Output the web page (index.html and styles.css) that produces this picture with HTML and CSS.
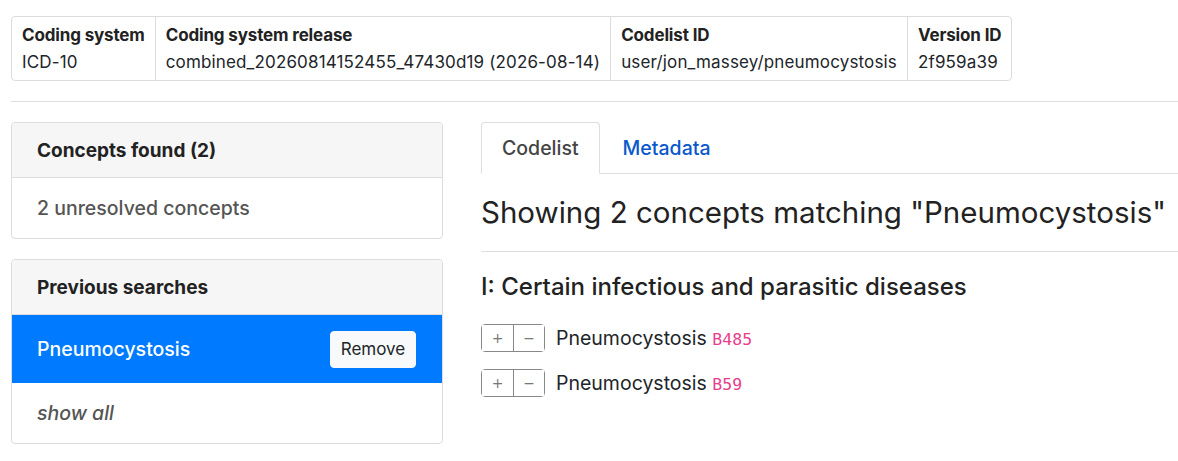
FILE: index.html
```html
<!DOCTYPE html>
<html lang="en">
<head>
<meta charset="utf-8">
<title>Codelist</title>
<link rel="stylesheet" href="styles.css">
</head>
<body>
<div class="page">
  <div class="meta">
    <div class="meta-cell"><div class="meta-key">Coding system</div><div class="meta-val">ICD-10</div></div>
    <div class="meta-cell"><div class="meta-key">Coding system release</div><div class="meta-val">combined_20260814152455_47430d19 (2026-08-14)</div></div>
    <div class="meta-cell"><div class="meta-key">Codelist ID</div><div class="meta-val">user/jon_massey/pneumocystosis</div></div>
    <div class="meta-cell"><div class="meta-key">Version ID</div><div class="meta-val">2f959a39</div></div>
  </div>
  <hr class="rule rule-top">
  <div class="layout">
    <aside class="sidebar">
      <section class="card">
        <div class="card-head">Concepts found (2)</div>
        <div class="card-item muted">2 unresolved concepts</div>
      </section>
      <section class="card">
        <div class="card-head">Previous searches</div>
        <div class="card-item active">
          <span>Pneumocystosis</span>
          <button class="btn-remove" type="button">Remove</button>
        </div>
        <div class="card-item muted italic">show all</div>
      </section>
    </aside>
    <main class="main">
      <nav class="tabs">
        <a class="tab tab-active">Codelist</a>
        <a class="tab tab-link">Metadata</a>
      </nav>
      <h3 class="title">Showing 2 concepts matching "Pneumocystosis"</h3>
      <hr class="rule">
      <h4 class="chapter">I: Certain infectious and parasitic diseases</h4>
      <ul class="concepts">
        <li class="concept">
          <span class="btn-group"><button class="pm" type="button">+</button><button class="pm" type="button">&minus;</button></span>
          <span class="concept-label"><span class="concept-name">Pneumocystosis</span> <code class="code">B485</code></span>
        </li>
        <li class="concept">
          <span class="btn-group"><button class="pm" type="button">+</button><button class="pm" type="button">&minus;</button></span>
          <span class="concept-label"><span class="concept-name">Pneumocystosis</span> <code class="code">B59</code></span>
        </li>
      </ul>
    </main>
  </div>
</div>
</body>
</html>
```
FILE: styles.css
```css
* { box-sizing: border-box; }
html, body { margin: 0; padding: 0; background: #fff; }
body {
  font-family: Inter, "Liberation Sans", sans-serif;
  color: #212529;
  font-size: 16px;
  overflow: hidden;
}
.page {
  padding: 16px 0 0 11px;
  width: 1190px;
}
.meta {
  display: inline-flex;
  border: 1px solid #dcdcdc;
  border-radius: 4px;
  font-size: 17px;
}
.meta-cell {
  padding: 6px 10px;
  border-left: 1px solid #dcdcdc;
}
.meta-cell:first-child { border-left: none; }
.meta-key { font-weight: 700; line-height: 24px; color: #222; letter-spacing: -0.15px; }
.meta-val { line-height: 24px; margin-top: 3px; letter-spacing: 0.15px; }
.rule {
  border: none;
  border-top: 1px solid #dedede;
  margin: 0;
}
.rule-top { margin: 20px 0 20px; }
.layout {
  display: flex;
  gap: 38px;
}
.sidebar {
  width: 432px;
  flex: none;
  display: flex;
  flex-direction: column;
  gap: 20px;
}
.card {
  border: 1px solid #dcdcdc;
  border-radius: 4px;
  overflow: hidden;
}
.card-head {
  background: #f6f6f6;
  border-bottom: 1px solid #dcdcdc;
  height: 55px;
  display: flex;
  align-items: center;
  padding: 0 25px;
  font-size: 19px;
  font-weight: 700;
  color: #222;
}
.card-item {
  height: 60px;
  display: flex;
  align-items: center;
  padding: 0 25px;
  font-size: 19.5px;
  font-weight: 500;
}
.muted { color: #555; }
.italic { font-style: italic; }
.card-item.active {
  background: #007bff;
  color: #fff;
  height: 68px;
  justify-content: space-between;
}
.btn-remove {
  font: inherit;
  font-size: 17px;
  font-weight: 400;
  color: #212529;
  background: #f8f9fa;
  border: 1px solid #f8f9fa;
  border-radius: 4px;
  height: 37px;
  width: 86px;
  margin-right: 1px;
  padding: 0;
}
.main { flex: 1; min-width: 0; }
.tabs {
  display: flex;
  border-bottom: 1px solid #dedede;
  height: 52px;
}
.tab {
  display: flex;
  align-items: center;
  padding: 0 20px;
  font-size: 19.5px;
  font-weight: 500;
  margin-bottom: -1px;
  border: 1px solid transparent;
  border-radius: 4px 4px 0 0;
}
.tab-active {
  border-color: #dedede #dedede #fff;
  background: #fff;
  color: #444;
}
.tab-link { color: #0a58ca; padding-left: 22px; }
.title {
  font-size: 29.5px;
  font-weight: 400;
  line-height: 34px;
  margin: 21px 0 22px;
  color: #222;
}
.chapter {
  font-size: 24px;
  font-weight: 500;
  line-height: 28px;
  margin: 21px 0 23px;
  color: #222;
}
.concepts { list-style: none; margin: 0; padding: 0; }
.concept {
  display: flex;
  align-items: center;
  height: 28px;
  margin-bottom: 17px;
}
.concept-label {
  font-size: 19.5px;
  line-height: 28px;
  padding-top: 1px;
}
.btn-group {
  display: inline-flex;
  border: 1px solid #888;
  border-radius: 4px;
  height: 28px;
  margin-right: 11px;
}
.pm {
  width: 31px;
  border: none;
  background: #fff;
  color: #777;
  font: 14px "DejaVu Sans", sans-serif;
  padding: 0;
}
.pm + .pm { border-left: 1px solid #888; }
.code {
  font-family: "DejaVu Sans Mono", monospace;
  color: #e83e8c;
  font-size: 16.5px;
}
```
